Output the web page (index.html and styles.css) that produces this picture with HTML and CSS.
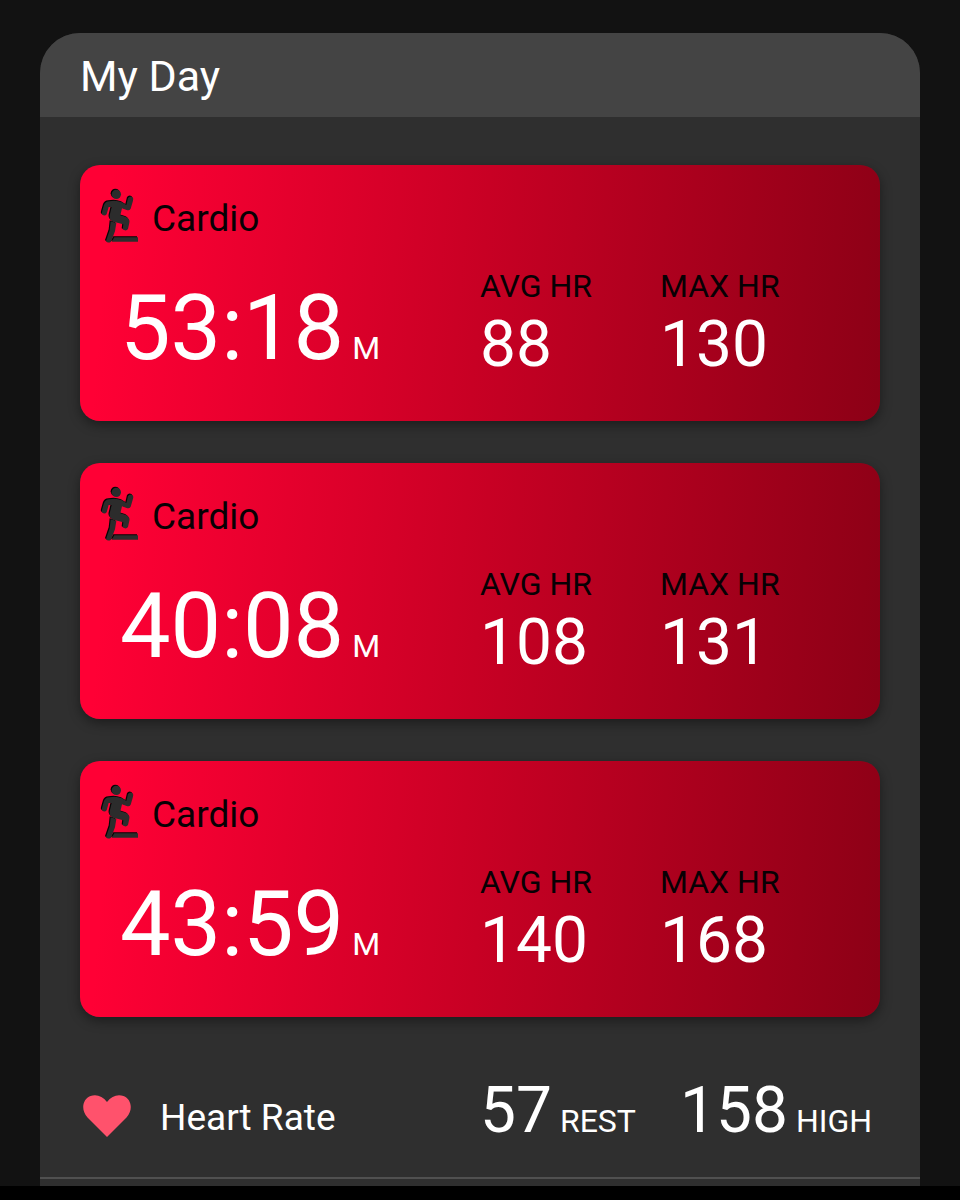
FILE: index.html
```html
<!DOCTYPE html>
<html lang="en">
<head>
<meta charset="utf-8">
<meta name="viewport" content="width=device-width, initial-scale=1">
<title>My Day</title>
<link rel="stylesheet" href="styles.css">
</head>
<body>
<svg class="defs" aria-hidden="true">
  <symbol id="cardio" viewBox="31 21 120 168">
    <circle cx="77" cy="40" r="14"/>
    <path d="M56 61 Q76 56 94 64 L107 72 L112 51 Q118 43 126 49 Q129 53 127 59 L120 83 Q116 90 108 87 L94 82 L89 103 L106 108 Q119 114 116 125 L112 144 Q106 152 96 145 L98 130 L68 122 Q54 116 57 103 L63 78 L54 78 L48 100 Q42 107 34 100 Q33 97 34 93 L40 72 Q44 62 56 61 Z"/>
    <path d="M60 121 L77 126 L73 151 L61 182 Q51 188 46 180 L57 148 Z"/>
    <path d="M71 169 H142 V182 H63 Z"/>
  </symbol>
  <symbol id="heart" viewBox="0 0 49 42">
    <path d="M24.500 42 L5 22.500 C-2 15 0 4 8 1 C14 -1 20 1 24.500 7 C29 1 35 -1 41 1 C49 4 51 15 44 22.500 Z"/>
  </symbol>
</svg>
<main class="panel">
  <header class="panel-header"><h1 class="title">My Day</h1></header>
  <section class="cards">
    <article class="card">
      <h2 class="activity"><svg class="activity-icon" aria-hidden="true"><use class="icon-edge" href="#cardio"/><use class="icon-face" href="#cardio" x="1" y="1"/></svg>Cardio</h2>
      <div class="metrics">
        <p class="duration"><span class="time">53:18</span><span class="unit">M</span></p>
        <dl class="metric"><dt>AVG HR</dt><dd>88</dd></dl>
        <dl class="metric"><dt>MAX HR</dt><dd>130</dd></dl>
      </div>
    </article>
    <article class="card">
      <h2 class="activity"><svg class="activity-icon" aria-hidden="true"><use class="icon-edge" href="#cardio"/><use class="icon-face" href="#cardio" x="1" y="1"/></svg>Cardio</h2>
      <div class="metrics">
        <p class="duration"><span class="time">40:08</span><span class="unit">M</span></p>
        <dl class="metric"><dt>AVG HR</dt><dd>108</dd></dl>
        <dl class="metric"><dt>MAX HR</dt><dd>131</dd></dl>
      </div>
    </article>
    <article class="card">
      <h2 class="activity"><svg class="activity-icon" aria-hidden="true"><use class="icon-edge" href="#cardio"/><use class="icon-face" href="#cardio" x="1" y="1"/></svg>Cardio</h2>
      <div class="metrics">
        <p class="duration"><span class="time">43:59</span><span class="unit">M</span></p>
        <dl class="metric"><dt>AVG HR</dt><dd>140</dd></dl>
        <dl class="metric"><dt>MAX HR</dt><dd>168</dd></dl>
      </div>
    </article>
  </section>
  <section class="heart-row">
    <h2 class="heart-label"><svg class="heart-icon" aria-hidden="true"><use href="#heart"/></svg>Heart Rate</h2>
    <p class="reading"><span class="value">57</span><span class="unit">REST</span></p>
    <p class="reading"><span class="value">158</span><span class="unit">HIGH</span></p>
  </section>
</main>
<footer class="bottom-bar"></footer>
</body>
</html>
```

FILE: styles.css
```css
* { box-sizing: border-box; }

body {
  margin: 0;
  min-height: 100vh;
  padding-top: 33px;
  display: flex;
  flex-direction: column;
  background: #121212;
  color: #fff;
  font-family: Roboto, "Liberation Sans", sans-serif;
}

h1, h2, p, dl, dd { margin: 0; font-weight: 400; }

.defs { position: absolute; width: 0; height: 0; }

.panel {
  margin: 0 40px;
  padding-bottom: 7px;
  background: #2f2f2f;
  border-radius: 40px 40px 0 0;
  overflow: hidden;
}

.panel-header {
  padding: 19px 40px 17px;
  background: #444;
}

.title { font-size: 43px; line-height: 48px; }

.cards {
  display: grid;
  gap: 42px;
  padding: 48px 40px 0;
}

.card {
  padding: 22px 0 36px;
  border-radius: 20px;
  background: linear-gradient(95deg, #ff0035 4%, #c80024 50%, #8c0016 100%);
  box-shadow: 0 4px 12px rgba(0, 0, 0, 0.4);
}

.activity {
  display: flex;
  align-items: flex-start;
  gap: 12px;
  padding-left: 20px;
  color: #080004;
  font-size: 37px;
  line-height: 64px;
}

.activity-icon { width: 40px; height: 56px; }
.icon-edge { fill: #050505; }
.icon-face { fill: #2c2c2c; }

.metrics {
  display: grid;
  grid-template-columns: 20fr 9fr 11fr;
  align-items: end;
  padding-top: 16px;
}

.duration {
  display: flex;
  align-items: baseline;
  gap: 8px;
  padding: 0 0 8px 40px;
}

.time { font-size: 90px; line-height: 96px; }
.unit { font-size: 32px; line-height: 36px; }

.metric dt { color: #080004; font-size: 32px; line-height: 38px; }
.metric dd { font-size: 64px; line-height: 80px; }

.heart-row {
  display: grid;
  grid-template-columns: 20fr 10fr 10fr;
  align-items: end;
  padding: 56px 40px 28px;
  border-bottom: 2px solid #505050;
}

.heart-label {
  display: flex;
  align-items: flex-start;
  gap: 28px;
  padding: 0 0 8px 2px;
  font-size: 37px;
  line-height: 46px;
}

.heart-icon { width: 50px; height: 42px; fill: #ff526c; }

.reading { display: flex; align-items: baseline; gap: 8px; }
.value { font-size: 64px; line-height: 76px; }

.bottom-bar { flex: 1; background: #000; }
```
